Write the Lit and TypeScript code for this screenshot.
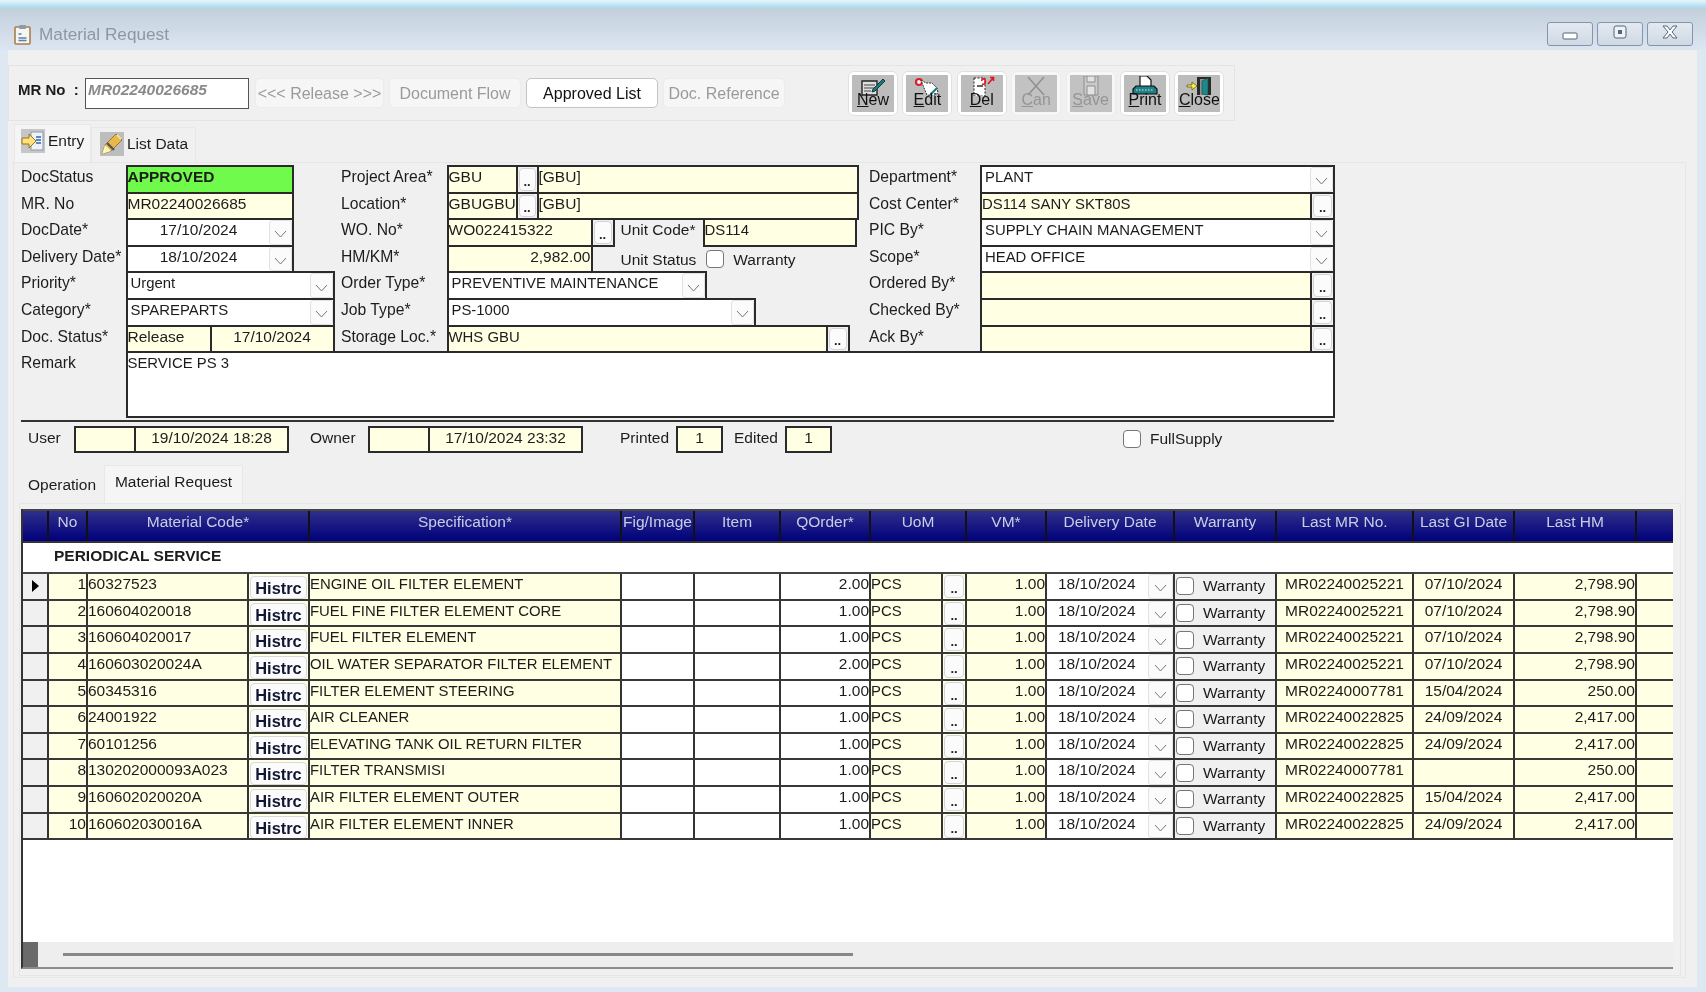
import { LitElement, html, css, svg } from "lit";
import { customElement } from "lit/decorators.js";

type Item = [string, string, string, string, string, string, string];

const ITEMS: Item[] = [
  ["1", "60327523", "ENGINE OIL FILTER ELEMENT", "2.00", "MR02240025221", "07/10/2024", "2,798.90"],
  ["2", "160604020018", "FUEL FINE FILTER ELEMENT CORE", "1.00", "MR02240025221", "07/10/2024", "2,798.90"],
  ["3", "160604020017", "FUEL FILTER ELEMENT", "1.00", "MR02240025221", "07/10/2024", "2,798.90"],
  ["4", "160603020024A", "OIL WATER SEPARATOR FILTER ELEMENT", "2.00", "MR02240025221", "07/10/2024", "2,798.90"],
  ["5", "60345316", "FILTER ELEMENT STEERING", "1.00", "MR02240007781", "15/04/2024", "250.00"],
  ["6", "24001922", "AIR CLEANER", "1.00", "MR02240022825", "24/09/2024", "2,417.00"],
  ["7", "60101256", "ELEVATING TANK OIL RETURN FILTER", "1.00", "MR02240022825", "24/09/2024", "2,417.00"],
  ["8", "130202000093A023", "FILTER TRANSMISI", "1.00", "MR02240007781", "", "250.00"],
  ["9", "160602020020A", "AIR FILTER ELEMENT OUTER", "1.00", "MR02240022825", "15/04/2024", "2,417.00"],
  ["10", "160602030016A", "AIR FILTER ELEMENT INNER", "1.00", "MR02240022825", "24/09/2024", "2,417.00"],
];

// toolbar pictures, all on a 28x20 box
const ICONS: Record<string, unknown> = {
  New: svg`<path d="M3 5h15v14H3z" fill="#dedede" stroke="#222" stroke-width="1.4"/><path d="M5 9h11M5 12h10M5 15h7" stroke="#444"/><path d="M14 13L24 3l2 2-10 10-3 1z" fill="#1d7a80" stroke="#10393c"/>`,
  Edit: svg`<circle cx="6" cy="6" r="3" fill="#f6f6f6" stroke="#d8222a" stroke-width="2.2"/><path d="M8 4l5 3 6 0 5 5 1 5-5 3-6-1-3-7z" fill="#fff" stroke="#333" stroke-dasharray="2 1"/><path d="M17 19l7-7" stroke="#1d7a80" stroke-width="2.2"/>`,
  Del: svg`<path d="M6 2h11v18H6z" fill="#fff" stroke="#222" stroke-dasharray="2 1.5"/><path d="M9 10h6" stroke="#222" stroke-width="1.4"/><path d="M14 8c3 1 4-1 3-4-1-2-4-1-3 1M20 8l5-6M22 1.500h3.500V5" fill="none" stroke="#e4141c" stroke-width="1.6"/>`,
  Can: svg`<path d="M6 1l16 18M22 1L6 19" stroke="#8f8f8f" stroke-width="1.5"/>`,
  Save: svg`<path d="M7 0h14v19H7z" fill="#c9c9c9" stroke="#8f8f8f"/><path d="M10 0h8v6h-8zM10 10h8v9h-8z" fill="#e2e2e2" stroke="#8f8f8f"/>`,
  Print: svg`<path d="M9 0h7l4 4v8H9z" fill="#fff" stroke="#111" stroke-width="1.2"/><path d="M5 10h18l3 3v5H2v-5z" fill="#1f7f86" stroke="#111" stroke-width="1.2"/><path d="M5 14h18" stroke="#cfeeee" stroke-width="1.2" stroke-dasharray="1.500 1.500"/>`,
  Close: svg`<path d="M12 1h14v18H12z" fill="#2a2a2a"/><path d="M15 3h8v16h-8z" fill="#909090"/><path d="M17 5l6-3v17l-6-1z" fill="#1c8a8a" stroke="#0d4a4a" stroke-width=".6"/><path d="M2 9h5V6l5 4-5 4v-3H2z" fill="#fff22a" stroke="#555020" stroke-width=".7"/>`,
};

@customElement("app-root")
export class AppRoot extends LitElement {
  static styles = css`
    :host {
      display: block;
      width: 1706px;
      height: 992px;
      overflow: hidden;
      font-family: "Liberation Sans", Arial, sans-serif;
      font-size: 15.5px;
      color: #1c1c1c;
    }
    .win {
      height: 992px;
      display: flex;
      flex-direction: column;
      background: #dde8f3;
      filter: blur(0.35px);
    }
    .strip {
      height: 8px;
      background: linear-gradient(#e8f5fb, #a6daee);
    }
    .title {
      height: 42px;
      box-sizing: border-box;
      display: flex;
      align-items: center;
      padding: 10px 13px 0 14px;
      background: linear-gradient(#c3cfda, #dbe6f2);
      color: #8d97a3;
      font-size: 17.2px;
    }
    .title svg { margin-right: 8px; flex: none; }
    .title span { flex: 1; }
    .wbtn {
      width: 46px;
      height: 24px;
      margin-left: 4px;
      box-sizing: border-box;
      border: 1px solid #8496ad;
      border-radius: 3px;
      background: linear-gradient(#e3e9f0, #cfd9e4);
      display: flex;
      align-items: center;
      justify-content: center;
      flex: none;
    }
    .title .wbtn svg { margin: 0; }
    .body {
      height: 937px;
      margin: 0 9px 0 8px;
      background: #f0f0f0;
      padding-top: 15px;
      box-sizing: border-box;
    }
    .toolbar {
      width: 1227px;
      height: 56px;
      box-sizing: border-box;
      border: 1px solid #e4e4e4;
      display: flex;
      align-items: center;
      padding-left: 9px;
    }
    .mr {
      font-weight: bold;
      font-size: 15px;
      width: 67px;
      margin-top: -8px;
      white-space: pre;
    }
    .mrin {
      width: 164px;
      height: 31px;
      box-sizing: border-box;
      border: 1px solid #555;
      background: #fff;
      color: #8a8a8a;
      font-weight: bold;
      font-style: italic;
      padding: 3px 2px;
      line-height: 16px;
      margin-right: 6px;
    }
    .tb {
      height: 30px;
      box-sizing: border-box;
      border: 1px solid #ececec;
      border-radius: 5px;
      background: #f6f6f6;
      color: #9a9a9a;
      display: flex;
      align-items: center;
      justify-content: center;
      margin-right: 5px;
      padding-top: 2px;
      font-size: 16px;
    }
    .tb.on {
      background: #fff;
      border-color: #c4c4c4;
      color: #111;
    }
    .tools {
      display: flex;
      gap: 4.4px;
      margin-left: 58px;
    }
    .tool {
      width: 50px;
      height: 45px;
      box-sizing: border-box;
      border: 1px solid #e0e0e0;
      border-radius: 6px;
      padding: 3px;
      background: #fff;
    }
    .tool.off { background: #f7f7f7; border-color: #ececec; }
    .tool div {
      height: 100%;
      background: #bcbcbc;
      display: flex;
      flex-direction: column;
      align-items: center;
      font-size: 16px;
      line-height: 15px;
      overflow: hidden;
      color: #111;
    }
    .tool.off div { color: #959595; background: #c2c2c2; }
    .tool svg { margin: 1px 0 -4px; flex: none; }
    .tool span { position: relative; }
    .tool u { text-underline-offset: 1px; }
    .tabs {
      height: 41px;
      display: flex;
      align-items: flex-end;
      padding-left: 6px;
    }
    .tab {
      display: flex;
      align-items: center;
      gap: 3px;
      box-sizing: border-box;
      height: 35px;
      width: 105px;
      padding: 0 0 3px 8px;
      border: 1px solid #e8e8e8;
      border-bottom: 0;
    }
    .tab.cur {
      height: 38px;
      width: 77px;
      padding-left: 6px;
      padding-bottom: 6px;
      background: #f5f5f5;
    }
    .panel {
      width: 1673px;
      height: 816px;
      margin-left: 5px;
      box-sizing: border-box;
      border: 1px solid #e6e6e6;
      padding: 2px 0 0 7px;
    }
    .cols { display: flex; }
    .col { flex: none; }
    .col.a { width: 320px; }
    .col.b { width: 528px; }
    .row {
      height: 26.6px;
      display: flex;
    }
    .lb {
      flex: none;
      line-height: 24px;
      white-space: nowrap;
      font-size: 15.7px;
    }
    .a .lb { width: 104.5px; }
    .b .lb { width: 105.5px; }
    .c .lb { width: 111px; }
    .f {
      flex: none;
      box-sizing: border-box;
      height: calc(100% + 2px);
      margin-right: -2px;
      border: 2px solid #2a2a2a;
      background: #fff;
      line-height: 19px;
      padding: 0;
      white-space: nowrap;
      overflow: hidden;
      position: relative;
    }
    .y { background: #ffffe4; }
    .g { background: #70fb4c; font-weight: bold; }
    .r { text-align: right; }
    .m { text-align: center; }
    .combo { padding-left: 3px; }
    .f.caps { font-size: 14.9px; line-height: 20px; }
    .dr > .caps { font-size: 14.9px; }
    .dd {
      position: absolute;
      right: 0;
      top: 0;
      bottom: 0;
      width: 23px;
      box-sizing: border-box;
      border: 1px solid #e2e2e2;
      border-radius: 3px;
      background: #fbfbfb;
      display: flex;
      align-items: center;
      justify-content: center;
      padding-top: 4px;
    }
    .dots {
      flex: none;
      box-sizing: border-box;
      height: calc(100% + 2px);
      margin-right: -2px;
      border: 2px solid #2a2a2a;
      background: #f0f0f0;
      padding: 1px;
    }
    .dotb {
      height: 100%;
      box-sizing: border-box;
      border: 1px solid #d4d4d4;
      border-radius: 4px;
      background: #fbfbfb;
      display: flex;
      align-items: flex-end;
      justify-content: center;
      font-size: 13px;
      font-weight: bold;
      line-height: 12px;
      padding-bottom: 2px;
    }
    .tag { margin-left: 9px; line-height: 24px; white-space: nowrap; flex: none; }
    .cb {
      flex: none;
      width: 18px;
      height: 18px;
      box-sizing: border-box;
      border: 1.5px solid #777;
      border-radius: 4px;
      background: #fff;
    }
    .remark {
      width: 1209px;
      height: 67px;
      margin-left: 104.5px;
      box-sizing: border-box;
      border: 2px solid #2a2a2a;
      background: #fff;
      line-height: 20px;
      font-size: 14.9px;
    }
    .rule {
      width: 1313px;
      height: 2px;
      margin-top: 2px;
      background: #333;
    }
    .stats {
      height: 30px;
      margin-top: 2px;
      display: flex;
      align-items: center;
      padding-left: 7px;
      width: 1313px;
    }
    .sf {
      flex: none;
      height: 27px;
      box-sizing: border-box;
      border: 2px solid #2a2a2a;
      margin-right: -2px;
      background: #ffffe4;
      line-height: 20px;
      text-align: center;
    }
    .st { flex: none; white-space: nowrap; margin-top: -3px; }
    .gtabs {
      display: flex;
      align-items: flex-end;
      height: 38px;
      margin: 11px 0 0 -1px;
    }
    .gt { width: 84px; height: 32px; text-align: center; line-height: 27px; }
    .gt.cur {
      width: 139px;
      height: 38px;
      background: #f5f5f5;
      border: 1px solid #e8e8e8;
      border-bottom: 0;
      box-sizing: border-box;
      line-height: 31px;
    }
    .gpage {
      height: 473px;
      width: 1662px;
      margin-left: -2px;
      box-sizing: border-box;
      border: 1px solid #e6e6e6;
      padding: 5px 0 0 1px;
    }
    .grid {
      width: 1652px;
      height: 460px;
      box-sizing: border-box;
      background: #fff;
      border-left: 2px solid #333;
      border-bottom: 2px solid #8c8c8c;
      display: flex;
      flex-direction: column;
    }
    .gr {
      display: grid;
      grid-template-columns: 26px 39px 161px 61px 312px 73px 86px 90px 72px 24px 80px 128px 102px 137px 101px 122px 36px;
    }
    .hd {
      height: 34px;
      flex: none;
      box-sizing: border-box;
      border-top: 2px solid #444;
      border-bottom: 2px solid #333;
      background: linear-gradient(#2f2f8a, #00007c);
      color: #c9cde4;
    }
    .hd div {
      box-sizing: border-box;
      border-right: 2px solid #111;
      text-align: center;
      line-height: 21px;
      white-space: nowrap;
      overflow: hidden;
    }
    .hd div:last-child { border-right: 0; }
    .s2 { grid-column: span 2; }
    .group {
      height: 31px;
      flex: none;
      box-sizing: border-box;
      border-bottom: 2px solid #444;
      padding-left: 31px;
      font-weight: bold;
      line-height: 26px;
    }
    .dr {
      height: 26.6px;
      flex: none;
      box-sizing: border-box;
      border-bottom: 2px solid #383838;
    }
    .dr > div {
      box-sizing: border-box;
      border-right: 2px solid #333;
      min-width: 0;
      white-space: nowrap;
      overflow: hidden;
      line-height: 20px;
      padding: 0;
      position: relative;
    }
    .dr > div:last-child { border-right: 0; }
    .gray { background: #f0f0f0; }
    .white { background: #fff; }
    .ind {
      display: flex;
      align-items: center;
      justify-content: center;
    }
    .dr > .btnc .hist {
      margin: 1px 0 0;
      height: 23px;
      box-sizing: border-box;
      border: 1px solid #d8d8d8;
      border-radius: 4px;
      background: #fbfbfb;
      font-weight: bold;
      font-size: 16.4px;
      color: #111733;
      text-align: center;
      line-height: 22px;
    }
    .dr > .btnc { padding: 1px; }
    .dr > .btnc .dotb { height: 23px; }
    .dr > .date { padding-left: 11px; }
    .dr .dd { width: 25px; }
    .wr {
      display: flex;
      align-items: center;
      gap: 9px;
    }
    .dr > .wr { padding-left: 1px; }
    .sbar {
      height: 25px;
      margin-top: auto;
      display: flex;
      background: #eeeeee;
      align-items: center;
    }
    .sq { width: 15px; height: 25px; background: #6a6a6a; }
    .thumb { width: 790px; height: 3px; margin-left: 25px; background: #888; }
  `;

  private chev() {
    return html`<svg width="13" height="8" viewBox="0 0 13 8"><path d="M1 1l5.5 6L12 1" fill="none" stroke="#777"/></svg>`;
  }

  private combo(text: string, width: number, center = false) {
    return html`<div class="f combo ${center ? "m" : "caps"}" style="width:${width}px;${center ? "padding-right:25px" : ""}">
      ${text}<span class="dd">${this.chev()}</span>
    </div>`;
  }

  private dots(width: number) {
    return html`<div class="dots" style="width:${width}px"><div class="dotb">..</div></div>`;
  }

  private field(text: string, width: number, cls = "y") {
    return html`<div class="f ${cls}" style="width:${width}px">${text}</div>`;
  }

  private tool(name: string, off = false) {
    return html`<div class="tool ${off ? "off" : ""}"><div>
      <svg width="28" height="20" viewBox="0 0 28 20">${ICONS[name]}</svg>
      <span><u>${name[0]}</u>${name.slice(1)}</span>
    </div></div>`;
  }

  private winIcon(kind: string) {
    if (kind === "min")
      return html`<svg width="16" height="12" viewBox="0 0 16 12"><rect x="1" y="5" width="14" height="6" rx="1" fill="#fff" stroke="#55657a"/></svg>`;
    if (kind === "max")
      return html`<svg width="16" height="14" viewBox="0 0 16 14" style="margin-top:-4px"><rect x="2" y="1" width="12" height="12" rx="2" fill="#eef2f6" stroke="#55657a"/><rect x="6" y="5" width="4" height="4" fill="#55657a"/></svg>`;
    return html`<svg width="18" height="14" viewBox="0 0 18 14" style="margin-top:-4px"><path d="M2 1h4l3 4 3-4h4l-5 6 5 6h-4l-3-4-3 4H2l5-6z" fill="#fff" stroke="#55657a"/></svg>`;
  }

  private gridRow(r: Item) {
    const first = r[0] === "1";
    return html`<div class="gr dr">
      <div class="gray ind">${first ? html`<svg width="10" height="14" viewBox="0 0 10 14"><path d="M2 1l7 6-7 6z" fill="#000"/></svg>` : ""}</div>
      <div class="y r">${r[0]}</div>
      <div class="y">${r[1]}</div>
      <div class="y btnc"><div class="hist">Histrc</div></div>
      <div class="y caps">${r[2]}</div>
      <div class="white"></div>
      <div class="white"></div>
      <div class="white r">${r[3]}</div>
      <div class="y caps">PCS</div>
      <div class="y btnc"><div class="dotb">..</div></div>
      <div class="y r">1.00</div>
      <div class="white date">18/10/2024<span class="dd">${this.chev()}</span></div>
      <div class="gray wr"><span class="cb"></span><span>Warranty</span></div>
      <div class="y m">${r[4]}</div>
      <div class="y m">${r[5]}</div>
      <div class="y r">${r[6]}</div>
      <div class="y"></div>
    </div>`;
  }

  render() {
    return html`<div class="win">
      <div class="strip"></div>
      <div class="title">
        <svg width="17" height="21" viewBox="0 0 17 21"><rect x="1" y="3" width="15" height="17" rx="1" fill="#f6f6f0" stroke="#a97f4c" stroke-width="1.6"/><rect x="5" y="1" width="7" height="4" rx="1" fill="#8d9aa8"/><path d="M4.500 10h3M4.500 14h8M4.500 16.500h8" stroke="#5a7fa8" stroke-width="1.4"/></svg>
        <span>Material Request</span>
        <div class="wbtn">${this.winIcon("min")}</div>
        <div class="wbtn">${this.winIcon("max")}</div>
        <div class="wbtn">${this.winIcon("close")}</div>
      </div>
      <div class="body">
        <div class="toolbar">
          <div class="mr">MR No  :</div>
          <div class="mrin">MR02240026685</div>
          <div class="tb" style="width:129px">&lt;&lt;&lt; Release &gt;&gt;&gt;</div>
          <div class="tb" style="width:132px">Document Flow</div>
          <div class="tb on" style="width:132px">Approved List</div>
          <div class="tb" style="width:122px">Doc. Reference</div>
          <div class="tools">
            ${this.tool("New")}${this.tool("Edit")}${this.tool("Del")}${this.tool("Can", true)}${this.tool("Save", true)}${this.tool("Print")}${this.tool("Close")}
          </div>
        </div>
        <div class="tabs">
          <div class="tab cur">
            <svg width="24" height="24" viewBox="0 0 24 24"><rect width="24" height="24" fill="#c6c6c6"/><rect x="10" y="3" width="12" height="18" fill="#eef2f6" stroke="#8a9ab0"/><path d="M15 8h5M15 11h5M15 14h5" stroke="#2f64b0" stroke-width="1.4"/><path d="M1 9h7V5l7 7-7 7v-4H1z" fill="#ffe27a" stroke="#96731f"/></svg>
            <span>Entry</span>
          </div>
          <div class="tab">
            <svg width="24" height="24" viewBox="0 0 24 24"><rect width="24" height="24" fill="#bdbdbd"/><path d="M2 22l3-9L16 2l6 6-11 11z" fill="#e8b94a" stroke="#8a6a20" stroke-width=".8"/><path d="M2 22l3-9 6 6z" fill="#fff6c8"/><path d="M7 11l7 7" stroke="#555" stroke-width="2.4"/><path d="M17 3l4 4" stroke="#fbe9a8" stroke-width="1.5"/></svg>
            <span>List Data</span>
          </div>
        </div>
        <div class="panel">
          <div class="cols">
            <div class="col a">
              <div class="row"><span class="lb">DocStatus</span>${this.field("APPROVED", 168, "g")}</div>
              <div class="row"><span class="lb">MR. No</span>${this.field("MR02240026685", 168)}</div>
              <div class="row"><span class="lb">DocDate*</span>${this.combo("17/10/2024", 168, true)}</div>
              <div class="row"><span class="lb">Delivery Date*</span>${this.combo("18/10/2024", 168, true)}</div>
              <div class="row"><span class="lb">Priority*</span>${this.combo("Urgent", 209)}</div>
              <div class="row"><span class="lb">Category*</span>${this.combo("SPAREPARTS", 209)}</div>
              <div class="row"><span class="lb">Doc. Status*</span>${this.field("Release", 86)}${this.field("17/10/2024", 125, "y m")}</div>
            </div>
            <div class="col b">
              <div class="row"><span class="lb">Project Area*</span>${this.field("GBU", 71)}${this.dots(23)}${this.field("[GBU]", 322)}</div>
              <div class="row"><span class="lb">Location*</span>${this.field("GBUGBU", 71)}${this.dots(23)}${this.field("[GBU]", 322)}</div>
              <div class="row"><span class="lb">WO. No*</span>${this.field("WO022415322", 146)}${this.dots(24)}
                <span class="tag" style="width:82px;margin-left:8px">Unit Code*</span>${this.field("DS114", 154, "y caps")}</div>
              <div class="row"><span class="lb">HM/KM*</span>${this.field("2,982.00", 146, "y r")}
                <span class="tag" style="margin-left:30px;line-height:29px">Unit Status</span>
                <span class="cb" style="margin:5px 0 0 10px"></span>
                <span class="tag" style="line-height:29px">Warranty</span></div>
              <div class="row"><span class="lb">Order Type*</span>${this.combo("PREVENTIVE MAINTENANCE", 260)}</div>
              <div class="row"><span class="lb">Job Type*</span>${this.combo("PS-1000", 309)}</div>
              <div class="row"><span class="lb">Storage Loc.*</span>${this.field("WHS GBU", 381, "y caps")}${this.dots(24)}</div>
            </div>
            <div class="col c">
              <div class="row"><span class="lb">Department*</span>${this.combo("PLANT", 355)}</div>
              <div class="row"><span class="lb">Cost Center*</span>${this.field("DS114 SANY SKT80S", 332, "y caps")}${this.dots(25)}</div>
              <div class="row"><span class="lb">PIC By*</span>${this.combo("SUPPLY CHAIN MANAGEMENT", 355)}</div>
              <div class="row"><span class="lb">Scope*</span>${this.combo("HEAD OFFICE", 355)}</div>
              <div class="row"><span class="lb">Ordered By*</span>${this.field("", 332)}${this.dots(25)}</div>
              <div class="row"><span class="lb">Checked By*</span>${this.field("", 332)}${this.dots(25)}</div>
              <div class="row"><span class="lb">Ack By*</span>${this.field("", 332)}${this.dots(25)}</div>
            </div>
          </div>
          <div class="row" style="height:0"><span class="lb">Remark</span></div>
          <div class="remark">SERVICE PS 3</div>
          <div class="rule"></div>
          <div class="stats">
            <span class="st" style="width:46px">User</span>
            <div class="sf" style="width:62px"></div><div class="sf" style="width:155px">19/10/2024 18:28</div>
            <span class="st" style="margin-left:23px;width:58px">Owner</span>
            <div class="sf" style="width:62px"></div><div class="sf" style="width:155px">17/10/2024 23:32</div>
            <span class="st" style="margin-left:39px;width:56px">Printed</span>
            <div class="sf" style="width:47px">1</div>
            <span class="st" style="margin-left:13px;width:51px">Edited</span>
            <div class="sf" style="width:47px">1</div>
            <span class="cb" style="margin-left:293px"></span>
            <span class="st" style="margin:0 0 0 9px">FullSupply</span>
          </div>
          <div class="gtabs">
            <div class="gt">Operation</div>
            <div class="gt cur">Material Request</div>
          </div>
          <div class="gpage">
            <div class="grid">
              <div class="gr hd">
                <div></div><div>No</div><div class="s2">Material Code*</div><div>Specification*</div><div>Fig/Image</div><div>Item</div><div>QOrder*</div>
                <div class="s2">UoM</div><div>VM*</div><div>Delivery Date</div><div>Warranty</div><div>Last MR No.</div><div>Last GI Date</div><div>Last HM</div><div></div>
              </div>
              <div class="group">PERIODICAL SERVICE</div>
              ${ITEMS.map((r) => this.gridRow(r))}
              <div class="sbar"><div class="sq"></div><div class="thumb"></div></div>
            </div>
          </div>
        </div>
      </div>
    </div>`;
  }
}
